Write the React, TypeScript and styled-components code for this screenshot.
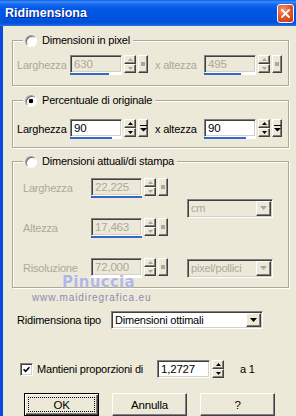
import React from "react";
import styled, { createGlobalStyle, css } from "styled-components";

const GlobalStyle = createGlobalStyle`
  html, body { margin: 0; padding: 0; background: #ece9d8; }
  body {
    font-family: "Liberation Sans", Arial, sans-serif;
    font-size: 11px;
    letter-spacing: -0.2px;
    color: #000;
  }
  *, *::before, *::after { box-sizing: border-box; }
`;

const DIS = "#aca899";

const Window = styled.div`
  width: 296px;
  height: 416px;
  overflow: hidden;
  display: flex;
  flex-direction: column;
  background: #ece9d8;
`;

const TitleBar = styled.div`
  flex: none;
  height: 26px;
  display: flex;
  align-items: center;
  justify-content: space-between;
  padding: 0 2px 0 5px;
  background: linear-gradient(
    180deg,
    #0a5ce6 0%,
    #3d8ff9 7%,
    #1a6af0 15%,
    #0058e6 35%,
    #0054e0 70%,
    #0050d8 88%,
    #2a6eea 100%
  );
`;

const Title = styled.span`
  font-family: "Liberation Sans", Arial, sans-serif;
  font-weight: bold;
  font-size: 12.5px;
  letter-spacing: 0;
  color: #fff;
  text-shadow: 1px 1px 0 #0a1e8c;
`;

const CloseBtn = styled.div`
  width: 17px;
  height: 19px;
  margin-top: 1px;
  border: 1px solid #fff;
  border-radius: 3px;
  background: radial-gradient(circle at 35% 30%, #f39a7a 0%, #e2592f 45%, #c13810 100%);
  display: flex;
  align-items: center;
  justify-content: center;
`;

const Body = styled.div`
  position: relative;
  flex: 1;
  display: flex;
  flex-direction: column;
  border-left: 3px solid #0b4bdc;
  padding: 8px 7px 0 9px;
`;

const Group = styled.fieldset<{ $pt: number; $pb: number; $mt: number }>`
  margin: ${(p) => p.$mt}px 0 0 0;
  min-width: 0;
  padding: ${(p) => p.$pt}px 0 ${(p) => p.$pb}px 0;
  border: 1px solid #aca899;
  box-shadow: inset 1px 1px 0 #fff, 1px 1px 0 #fff;
`;

const Legend = styled.legend`
  display: flex;
  align-items: center;
  gap: 5px;
  height: 13px;
  line-height: 13px;
  padding: 0 3px 0 2px;
  margin-left: 10px;
  background: #ece9d8;
  white-space: nowrap;
`;

const Radio = styled.span<{ $checked?: boolean }>`
  flex: none;
  width: 12px;
  height: 12px;
  border-radius: 50%;
  border: 1px solid;
  border-color: #a0a0a0 #fff #fff #a0a0a0;
  box-shadow: inset 1px 1px 0 #6a6a6a;
  background: ${(p) =>
    p.$checked ? "radial-gradient(circle, #000 0 2px, #fff 2.6px)" : "#fff"};
`;

const PairRow = styled.div`
  display: flex;
  align-items: center;
  height: 20px;
  padding-left: 4px;
`;

const FieldLabel = styled.span<{ $w: number; $disabled?: boolean }>`
  flex: none;
  width: ${(p) => p.$w}px;
  white-space: nowrap;
  color: ${(p) => (p.$disabled ? DIS : "#000")};
`;

const XLabel = styled.span<{ $disabled?: boolean }>`
  flex: none;
  width: 56px;
  padding-left: 7px;
  white-space: nowrap;
  color: ${(p) => (p.$disabled ? DIS : "#000")};
`;

const NumWrap = styled.div`
  display: flex;
  align-items: flex-start;
  gap: 2px;
  flex: none;
`;

const EditCol = styled.div<{ $w: number }>`
  width: ${(p) => p.$w}px;
  display: flex;
  flex-direction: column;
`;

const sunken = css`
  border: 1px solid;
  border-color: #808080 #fff #fff #808080;
  box-shadow: inset 1px 1px 0 #404040, inset -1px -1px 0 #d4d0c8;
`;

const raised = css`
  border: 1px solid;
  border-color: #fff #404040 #404040 #fff;
  box-shadow: inset -1px -1px 0 #808080;
  background: #ece9d8;
`;

const EditBox = styled.div<{ $disabled?: boolean }>`
  ${sunken};
  height: 18px;
  line-height: 16px;
  padding: 0 3px;
  background: ${(p) => (p.$disabled ? "#ece9d8" : "#fff")};
  color: ${(p) => (p.$disabled ? DIS : "#000")};
  font-size: 11.5px;
  white-space: nowrap;
  overflow: hidden;
`;

const Track = styled.div`
  height: 2px;
  background: #fff;
  display: flex;
`;

const Fill = styled.div`
  height: 100%;
  background: #316ac5;
`;

const SpinCol = styled.div`
  width: 12px;
  height: 18px;
  display: flex;
  flex-direction: column;
`;

const SpinBtn = styled.div`
  ${raised};
  flex: 1;
  display: flex;
  align-items: center;
  justify-content: center;
`;

const PopBtn = styled.div`
  ${raised};
  width: 10px;
  height: 18px;
  display: flex;
  align-items: center;
  justify-content: center;
`;

const PopSquare = styled.span`
  width: 4px;
  height: 4px;
  background: ${DIS};
`;

const Tri = ({ up, color }: { up?: boolean; color: string }) => (
  <svg width="5" height="3" viewBox="0 0 5 3">
    <path d={up ? "M2.5 0 5 3H0z" : "M0 0h5L2.5 3z"} fill={color} />
  </svg>
);

const Spin = ({ disabled }: { disabled?: boolean }) => {
  const c = disabled ? DIS : "#000";
  return (
    <SpinCol>
      <SpinBtn>
        <Tri up color={c} />
      </SpinBtn>
      <SpinBtn>
        <Tri color={c} />
      </SpinBtn>
    </SpinCol>
  );
};

type NumProps = {
  value: string;
  fill?: number;
  disabled?: boolean;
  w?: number;
  pop?: boolean;
  bar?: boolean;
};

const NumField = ({ value, fill = 0, disabled, w = 52, pop = true, bar = true }: NumProps) => (
  <NumWrap>
    <EditCol $w={w}>
      <EditBox $disabled={disabled}>{value}</EditBox>
      {bar && (
        <Track>
          <Fill style={{ width: `${fill}%` }} />
        </Track>
      )}
    </EditCol>
    <Spin disabled={disabled} />
    {pop && (
      <PopBtn>
        {disabled ? (
          <PopSquare />
        ) : (
          <svg width="7" height="8" viewBox="0 0 7 8">
            <rect x="0" y="1" width="7" height="1" fill="#000" />
            <path d="M0 4h7L3.5 7.5z" fill="#000" />
          </svg>
        )}
      </PopBtn>
    )}
  </NumWrap>
);

const SizeGrid = styled.div`
  display: grid;
  grid-template-columns: 68px 96px 86px;
  grid-template-rows: repeat(3, 20px);
  row-gap: 20px;
  align-items: center;
  padding-left: 10px;
`;

const GridCombo = styled.div<{ $rows: string }>`
  grid-column: 3;
  grid-row: ${(p) => p.$rows};
  align-self: center;
`;

const ComboBox = styled.div<{ $w: number; $h: number; $disabled?: boolean }>`
  ${sunken};
  width: ${(p) => p.$w}px;
  height: ${(p) => p.$h}px;
  display: flex;
  align-items: stretch;
  padding: 1px;
  background: ${(p) => (p.$disabled ? "#ece9d8" : "#fff")};
  color: ${(p) => (p.$disabled ? DIS : "#000")};
`;

const ComboText = styled.span`
  flex: 1;
  padding-left: 2px;
  display: flex;
  align-items: center;
  white-space: nowrap;
  overflow: hidden;
`;

const ComboBtn = styled.div`
  ${raised};
  width: 15px;
  flex: none;
  display: flex;
  align-items: center;
  justify-content: center;
`;

const Combo = ({
  text,
  w,
  h = 19,
  disabled,
}: {
  text: string;
  w: number;
  h?: number;
  disabled?: boolean;
}) => (
  <ComboBox $w={w} $h={h} $disabled={disabled}>
    <ComboText>{text}</ComboText>
    <ComboBtn>
      <svg width="7" height="4" viewBox="0 0 7 4">
        <path d="M0 0h7L3.5 4z" fill={disabled ? DIS : "#000"} />
      </svg>
    </ComboBtn>
  </ComboBox>
);

const TipoRow = styled.div`
  margin-top: 23px;
  display: flex;
  align-items: center;
  height: 18px;
  padding-left: 5px;
`;

const CheckRow = styled.div`
  margin-top: 31px;
  display: flex;
  align-items: center;
  height: 18px;
  padding-left: 8px;
`;

const CheckBox = styled.span`
  ${sunken};
  flex: none;
  width: 13px;
  height: 13px;
  background: #fff;
  display: flex;
  align-items: center;
  justify-content: center;
  margin-right: 4px;
`;

const Suffix = styled.span`
  margin-left: 16px;
`;

const ButtonRow = styled.div`
  margin-top: 15px;
  display: flex;
  gap: 13px;
  padding-left: 12px;
`;

const Btn = styled.div<{ $default?: boolean }>`
  ${raised};
  width: 75px;
  height: 23px;
  flex: none;
  display: flex;
  align-items: stretch;
  justify-content: center;
  padding: 3px;
  ${(p) =>
    p.$default &&
    css`
      border-color: #000;
      box-shadow: inset 1px 1px 0 #fff, inset -1px -1px 0 #404040, inset -2px -2px 0 #808080;
    `}
`;

const BtnFace = styled.span<{ $focus?: boolean }>`
  flex: 1;
  display: flex;
  align-items: center;
  justify-content: center;
  border: 1px dotted ${(p) => (p.$focus ? "#000" : "transparent")};
  font-size: 11.5px;
`;

const Watermark = styled.div`
  position: absolute;
  left: 29px;
  top: 249px;
  display: flex;
  flex-direction: column;
  align-items: flex-start;
  pointer-events: none;
`;

const WmName = styled.span`
  margin-left: 30px;
  font-family: "DejaVu Sans", sans-serif;
  font-weight: bold;
  font-size: 15px;
  line-height: 14px;
  letter-spacing: 0.3px;
  color: rgba(150, 160, 222, 0.75);
  text-shadow: 0 0 1px #fff;
`;

const WmUrl = styled.span`
  margin-top: 3px;
  font-size: 10px;
  line-height: 11px;
  letter-spacing: 0.9px;
  color: #8d89b3;
`;

export default function App() {
  return (
    <>
      <GlobalStyle />
      <Window>
        <TitleBar>
          <Title>Ridimensiona</Title>
          <CloseBtn>
            <svg width="9" height="9" viewBox="0 0 9 9">
              <path d="M1 1l7 7M8 1l-7 7" stroke="#fff" strokeWidth="1.8" strokeLinecap="square" />
            </svg>
          </CloseBtn>
        </TitleBar>
        <Body>
          <Group $mt={0} $pt={8} $pb={10}>
            <Legend>
              <Radio />
              Dimensioni in pixel
            </Legend>
            <PairRow>
              <FieldLabel $w={53} $disabled>
                Larghezza
              </FieldLabel>
              <NumField value="630" fill={75} disabled />
              <XLabel $disabled>x altezza</XLabel>
              <NumField value="495" fill={72} disabled />
            </PairRow>
          </Group>

          <Group $mt={8} $pt={12} $pb={8}>
            <Legend>
              <Radio $checked />
              Percentuale di originale
            </Legend>
            <PairRow>
              <FieldLabel $w={53}>Larghezza</FieldLabel>
              <NumField value="90" fill={80} />
              <XLabel>x altezza</XLabel>
              <NumField value="90" fill={80} />
            </PairRow>
          </Group>

          <Group $mt={7} $pt={10} $pb={9}>
            <Legend>
              <Radio />
              Dimensioni attuali/di stampa
            </Legend>
            <SizeGrid>
              <FieldLabel $w={68} $disabled>
                Larghezza
              </FieldLabel>
              <NumField value="22,225" fill={100} disabled w={51} />
              <GridCombo $rows="1 / span 2">
                <Combo text="cm" w={86} disabled />
              </GridCombo>
              <FieldLabel $w={68} $disabled>
                Altezza
              </FieldLabel>
              <NumField value="17,463" fill={100} disabled w={51} />
              <FieldLabel $w={68} $disabled>
                Risoluzione
              </FieldLabel>
              <NumField value="72,000" fill={0} disabled w={51} />
              <GridCombo $rows="3">
                <Combo text="pixel/pollici" w={86} disabled />
              </GridCombo>
            </SizeGrid>
          </Group>

          <TipoRow>
            <FieldLabel $w={94}>Ridimensiona tipo</FieldLabel>
            <Combo text="Dimensioni ottimali" w={152} h={18} />
          </TipoRow>

          <CheckRow>
            <CheckBox>
              <svg width="7" height="7" viewBox="0 0 7 7">
                <path d="M0.5 3.2 2.6 5.3 6.5 1.2" stroke="#000" strokeWidth="1.6" fill="none" />
              </svg>
            </CheckBox>
            <FieldLabel $w={120}>Mantieni proporzioni di</FieldLabel>
            <NumField value="1,2727" w={53} pop={false} bar={false} />
            <Suffix>a 1</Suffix>
          </CheckRow>

          <ButtonRow>
            <Btn $default>
              <BtnFace $focus>OK</BtnFace>
            </Btn>
            <Btn>
              <BtnFace>Annulla</BtnFace>
            </Btn>
            <Btn>
              <BtnFace>?</BtnFace>
            </Btn>
          </ButtonRow>

          <Watermark>
            <WmName>Pinuccia</WmName>
            <WmUrl>www.maidiregrafica.eu</WmUrl>
          </Watermark>
        </Body>
      </Window>
    </>
  );
}
